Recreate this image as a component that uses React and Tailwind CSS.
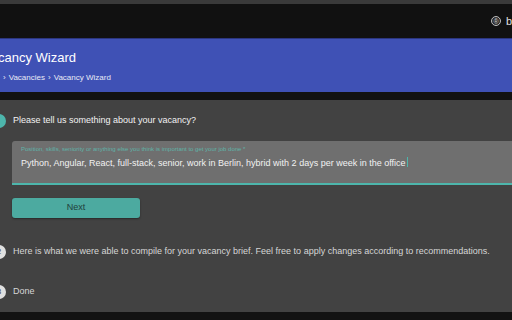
import React from 'react';

const font = { fontFamily: '"Liberation Sans", Arial, sans-serif' };

const StepDot = ({ active, children }) => (
  <span
    className={`flex h-[14px] w-[14px] shrink-0 items-center justify-center rounded-full text-[8px] ${
      active ? 'bg-[#4db6ac] text-[#4db6ac]' : 'bg-[#e0e0e0] text-[#424242]'
    }`}
  >
    {children}
  </span>
);

const App = () => {
  return (
    <div className="flex h-[320px] w-[512px] flex-col overflow-hidden bg-[#121212]" style={font}>
      {/* top bar */}
      <div className="h-[4px] bg-[#3a3a3a]" />
      <div className="flex h-[34px] items-center justify-end gap-[5px] bg-[#111111]">
        <span className="flex h-[10px] w-[10px] items-center justify-center rounded-full border border-[#bdbdbd] bg-[#2a2a2a] text-[7px] leading-none text-[#d0d0d0]">
          ®
        </span>
        <span className="w-[6px] overflow-hidden text-[11px] text-[#e0e0e0]">b</span>
      </div>

      {/* banner */}
      <div className="flex h-[54px] flex-col border-t border-[#2c3680] bg-[#3f51b5] pt-[11px] text-white">
        <h1 className="ml-[-17px] text-[13px] leading-[16px]">Vacancy Wizard</h1>
        <div className="ml-[3px] mt-[7px] flex items-center gap-[3px] text-[8px] leading-[10px] text-[#e8eaf6]">
          <span>›</span>
          <span>Vacancies</span>
          <span>›</span>
          <span>Vacancy Wizard</span>
        </div>
      </div>

      <div className="h-[8px] bg-[#121212]" />

      {/* wizard */}
      <div className="flex h-[212px] flex-col bg-[#424242] pt-[14px] text-[9px]">
        <div className="ml-[-8px] flex items-center gap-[7px]">
          <StepDot active>1</StepDot>
          <span className="text-[#f2f2f2]">Please tell us something about your vacancy?</span>
        </div>

        <div className="ml-[12px] mt-[13px] flex h-[44px] w-[520px] flex-col rounded-t-[3px] border-b-2 border-[#4db6ac] bg-[#6f6f6f] px-[9px] pt-[4px]">
          <span className="text-[6px] leading-[8px] text-[#5fb3a8]">
            Position, skills, seniority or anything else you think is important to get your job done *
          </span>
          <span className="mt-[3px] leading-[12px] text-[#f2f2f2]">
            Python, Angular, React, full-stack, senior, work in Berlin, hybrid with 2 days per week in the office
            <span className="ml-px inline-block h-[10px] w-px translate-y-[1px] bg-[#4db6ac]" />
          </span>
        </div>

        <button className="ml-[12px] mt-[13px] h-[20px] w-[128px] rounded-[3px] bg-[#4caaa0] text-[9px] text-[#22403c] shadow-[0_1px_2px_rgba(0,0,0,0.4)]">
          Next
        </button>

        <div className="ml-[-8px] mt-[27px] flex items-center gap-[7px]">
          <StepDot>2</StepDot>
          <span className="text-[#d6d6d6]">
            Here is what we were able to compile for your vacancy brief. Feel free to apply changes according to recommendations.
          </span>
        </div>

        <div className="ml-[-8px] mt-[26px] flex items-center gap-[7px]">
          <StepDot>3</StepDot>
          <span className="text-[#d6d6d6]">Done</span>
        </div>
      </div>

      <div className="flex-1 bg-[#121212]" />
    </div>
  );
};

export default App;
